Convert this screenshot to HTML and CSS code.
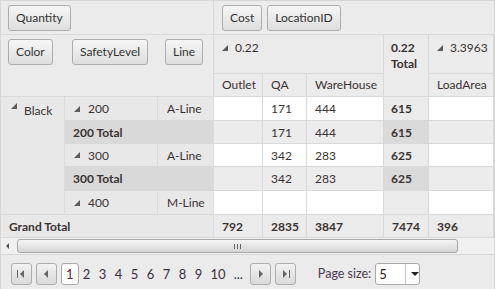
FILE: index.html
```html
<!DOCTYPE html>
<html lang="en">
<head>
    <meta charset="UTF-8">
    <title>Pivot Grid</title>
    <link rel="stylesheet" href="styles.css">
</head>
<body>
<div class="pivot">
    <!-- measure + column fields -->
    <div class="field-row">
        <div class="measure-zone"><span class="field-btn">Quantity</span></div>
        <div class="column-zone">
            <span class="field-btn">Cost</span>
            <span class="field-btn">LocationID</span>
        </div>
    </div>

    <div class="grid">
        <!-- row fields -->
        <div class="row-field c1"><span class="field-btn">Color</span></div>
        <div class="row-field c2"><span class="field-btn">SafetyLevel</span></div>
        <div class="row-field c3"><span class="field-btn">Line</span></div>

        <!-- column headers -->
        <div class="hcell h-top head-022"><span class="tri"></span>0.22</div>
        <div class="hcell h-top total-head">0.22<br>Total</div>
        <div class="hcell h-top head-339"><span class="tri"></span>3.3963</div>
        <div class="hcell col4">Outlet</div>
        <div class="hcell col5">QA</div>
        <div class="hcell col6">WareHouse</div>
        <div class="hcell col8">LoadArea</div>

        <!-- rows -->
        <div class="rcell black"><span class="tri"></span>Black</div>

        <div class="rcell"><span class="tri tri-wide"></span>200</div>
        <div class="rcell">A-Line</div>
        <div class="dcell"></div>
        <div class="dcell">171</div>
        <div class="dcell">444</div>
        <div class="dcell tcol">615</div>
        <div class="dcell"></div>

        <div class="rcell rtotal span-2">200 Total</div>
        <div class="dcell trow"></div>
        <div class="dcell trow">171</div>
        <div class="dcell trow">444</div>
        <div class="dcell trow tcross">615</div>
        <div class="dcell trow"></div>

        <div class="rcell"><span class="tri tri-wide"></span>300</div>
        <div class="rcell">A-Line</div>
        <div class="dcell"></div>
        <div class="dcell">342</div>
        <div class="dcell">283</div>
        <div class="dcell tcol">625</div>
        <div class="dcell"></div>

        <div class="rcell rtotal span-2">300 Total</div>
        <div class="dcell trow"></div>
        <div class="dcell trow">342</div>
        <div class="dcell trow">283</div>
        <div class="dcell trow tcross">625</div>
        <div class="dcell trow"></div>

        <div class="rcell"><span class="tri tri-wide"></span>400</div>
        <div class="rcell">M-Line</div>
        <div class="dcell"></div>
        <div class="dcell"></div>
        <div class="dcell"></div>
        <div class="dcell tcol"></div>
        <div class="dcell"></div>

        <div class="rcell grand span-all">Grand Total</div>
        <div class="dcell grand">792</div>
        <div class="dcell grand">2835</div>
        <div class="dcell grand">3847</div>
        <div class="dcell grand">7474</div>
        <div class="dcell grand">396</div>
    </div>

    <!-- horizontal scrollbar -->
    <div class="hscroll">
        <span class="arrow-left"></span>
        <div class="thumb"><span class="grip"></span></div>
    </div>

    <!-- pager -->
    <div class="pager">
        <span class="pg-btn">
            <svg width="19" height="20" viewBox="0 0 19 20"><rect x="5" y="6" width="1" height="8" fill="#666"/><path d="M12 6 L8 10 L12 14 Z" fill="#666"/></svg>
        </span>
        <span class="pg-btn">
            <svg width="19" height="20" viewBox="0 0 19 20"><path d="M11 6 L7 10 L11 14 Z" fill="#666"/></svg>
        </span>
        <span class="page current">1</span>
        <span class="page">2</span>
        <span class="page">3</span>
        <span class="page">4</span>
        <span class="page">5</span>
        <span class="page">6</span>
        <span class="page">7</span>
        <span class="page">8</span>
        <span class="page">9</span>
        <span class="page">10</span>
        <span class="page">...</span>
        <span class="pg-btn next">
            <svg width="19" height="20" viewBox="0 0 19 20"><path d="M8 6 L12 10 L8 14 Z" fill="#666"/></svg>
        </span>
        <span class="pg-btn">
            <svg width="19" height="20" viewBox="0 0 19 20"><path d="M7 6 L11 10 L7 14 Z" fill="#666"/><rect x="13" y="6" width="1" height="8" fill="#666"/></svg>
        </span>
        <span class="page-size">Page size:</span>
        <span class="dropdown">
            <span class="dd-value">5</span>
            <span class="dd-arrow"></span>
        </span>
    </div>
</div>
</body>
</html>
```

FILE: styles.css
```css
body {
    margin: 0;
    font-family: Lato, "Liberation Sans", sans-serif;
    font-size: 12px;
    color: #3a3232;
}

.pivot {
    width: 495px;
    height: 289px;
    box-sizing: border-box;
    border: 1px solid #d6d6d6;
    border-bottom: none;
    background-color: #ebebeb;
    overflow: hidden;
}

/* top zone with measure and column fields */
.field-row {
    display: grid;
    grid-template-columns: 213px 1fr;
    height: 34px;
    box-sizing: border-box;
    border-bottom: 1px solid #d9d9d9;
}

.measure-zone {
    border-right: 1px solid #d9d9d9;
    padding: 4px 0 0 7px;
}

.column-zone {
    display: flex;
    gap: 5px;
    align-items: flex-start;
    padding: 4px 0 0 8px;
}

.field-btn {
    display: inline-block;
    height: 26px;
    line-height: 24px;
    box-sizing: border-box;
    padding: 0 7px;
    border: 1px solid #adadad;
    border-radius: 3px;
    background: linear-gradient(#f6f6f6, #dedede);
    color: #333;
    white-space: nowrap;
}

/* pivot table */
.grid {
    display: grid;
    grid-template-columns: 64px 93px 56px 49px 44px 77px 45px 65px;
    grid-template-rows: 39px 23px 24px 23px 23px 24px 24px 23px;
}

.grid > div {
    box-sizing: border-box;
    border-bottom: 1px solid #d9d9d9;
    white-space: nowrap;
    overflow: hidden;
}

.row-field {
    grid-row: 1 / 3;
    padding: 4px 0 0 7px;
}

.row-field.c1 { grid-column: 1; }
.row-field.c2 { grid-column: 2; }
.row-field.c3 { grid-column: 3; border-right: 1px solid #d9d9d9; }

.hcell {
    border-right: 1px solid #d9d9d9;
    padding: 0 8px;
    line-height: 22px;
}

.h-top {
    padding-top: 5px;
    line-height: 16px;
}

.head-022 { grid-column: 4 / 7; grid-row: 1; }
.total-head { grid-column: 7; grid-row: 1 / 3; }
.head-339 { grid-column: 8; grid-row: 1; }
.col4 { grid-column: 4; grid-row: 2; }
.col5 { grid-column: 5; grid-row: 2; }
.col6 { grid-column: 6; grid-row: 2; }
.col8 { grid-column: 8; grid-row: 2; }

.total-head {
    font-weight: bold;
    padding-left: 7px;
}

.tri {
    display: inline-block;
    width: 0;
    height: 0;
    border-left: 6px solid transparent;
    border-bottom: 6px solid #5c5c5c;
    margin-right: 7px;
    vertical-align: 1px;
}

.tri-wide {
    margin-right: 8px;
}

.rcell {
    background-color: #e8e8e8;
    border-right: 1px solid #dcdcdc;
    padding: 0 8px;
    display: flex;
    align-items: center;
}

.black {
    grid-column: 1;
    grid-row: 3 / 8;
    align-items: flex-start;
    padding: 6px 0 0 10px;
}

.grid > .rcell:not(.black):not(.span-2):not(.grand) {
    padding-left: 9px;
}

.span-2 {
    grid-column: span 2;
}

.rtotal {
    background-color: #d9d9d9;
    font-weight: bold;
}

.span-all {
    grid-column: 1 / 4;
}

.dcell {
    background-color: #fff;
    border-right: 1px solid #d9d9d9;
    padding: 0 8px;
    display: flex;
    align-items: center;
}

.dcell.tcol {
    background-color: #ebebeb;
    font-weight: bold;
    padding-left: 7px;
}

.dcell.trow {
    background-color: #ececec;
}

.dcell.tcross {
    background-color: #dadada;
    font-weight: bold;
    padding-left: 7px;
}

.grand {
    background-color: #e8e8e8;
    font-weight: bold;
}

.dcell.grand {
    background-color: #ebebeb;
}

/* scrollbar */
.hscroll {
    height: 16px;
    display: flex;
    align-items: center;
    background-color: #f0f0f0;
    border-bottom: 1px solid #d6d6d6;
}

.arrow-left {
    width: 0;
    height: 0;
    border-top: 3px solid transparent;
    border-bottom: 3px solid transparent;
    border-right: 3px solid #555;
    margin: 0 8px 0 5px;
}

.thumb {
    width: 441px;
    height: 14px;
    box-sizing: border-box;
    border: 1px solid #a9a9a9;
    border-radius: 3px;
    background: linear-gradient(#f5f5f5, #d5d5d5);
    display: flex;
    justify-content: center;
    align-items: center;
}

.grip {
    width: 7px;
    height: 5px;
    background: repeating-linear-gradient(90deg, #666 0 1px, transparent 1px 3px);
}

/* pager */
.pager {
    height: 35px;
    box-sizing: border-box;
    display: flex;
    align-items: center;
    padding-left: 10px;
    padding-top: 2px;
}

.pg-btn {
    width: 21px;
    height: 22px;
    box-sizing: border-box;
    border: 1px solid #adadad;
    border-radius: 3px;
    background: linear-gradient(#f2f2f2, #d9d9d9);
    margin-right: 4px;
    display: flex;
    align-items: center;
    justify-content: center;
}

.pg-btn svg {
    display: block;
}

.pg-btn.next {
    margin-left: 3px;
}

.page {
    min-width: 16px;
    height: 22px;
    line-height: 22px;
    box-sizing: border-box;
    padding: 0 4px;
    text-align: center;
    color: #3b3040;
    font-size: 13px;
}

.page.current {
    background-color: #fff;
    border: 1px solid #a9a9a9;
    border-radius: 3px;
    line-height: 20px;
    color: #6a2140;
    margin-right: 0;
}

.page-size {
    margin-left: 18px;
    color: #4a3a4c;
    font-size: 12.5px;
}

.dropdown {
    margin-left: 4px;
    width: 45px;
    height: 22px;
    box-sizing: border-box;
    border: 1px solid #a9a9a9;
    border-radius: 3px;
    background-color: #fff;
    display: flex;
}

.dd-value {
    width: 26px;
    border-right: 1px solid #c5c5c5;
    padding-left: 3px;
    line-height: 20px;
    font-size: 13px;
    color: #222;
}

.dd-arrow {
    width: 0;
    height: 0;
    margin: 8px 0 0 5px;
    border-left: 4px solid transparent;
    border-right: 4px solid transparent;
    border-top: 4px solid #222;
}
```
